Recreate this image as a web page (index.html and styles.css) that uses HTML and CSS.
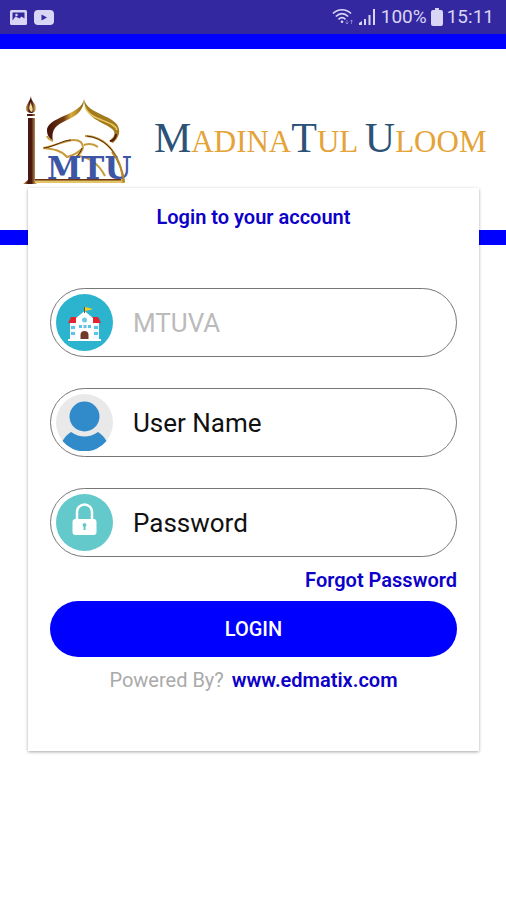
FILE: index.html
```
<!DOCTYPE html>
<html lang="en">
<head>
<meta charset="utf-8">
<meta name="viewport" content="width=device-width, initial-scale=1">
<title>MadinaTul Uloom</title>
<link rel="stylesheet" href="styles.css">
</head>
<body>
<div class="status">
  <div class="status-group">
    <svg width="18" height="17" viewBox="0 0 18 17" aria-hidden="true"><rect x="0" y="1" width="17" height="15" rx="1.500" fill="currentColor"/><path d="M2.500 3.500h12v6l-3-2-2 2-4-2-3 4z" fill="#3428a0"/><path d="M5 5.500l2-1 1 2-2 1z" fill="currentColor"/></svg>
    <svg width="20" height="16" viewBox="0 0 20 16" aria-hidden="true"><rect y="1" width="20" height="15" rx="4" fill="currentColor"/><path d="M7.500 5.500v6l5.500-3z" fill="#3428a0"/></svg>
  </div>
  <div class="status-group status-right">
    <svg width="22" height="18" viewBox="0 0 22 18" fill="none" stroke="currentColor" stroke-width="1.700" aria-hidden="true"><path d="M1 5.500C6 .5 14 .5 19 5.500M3.800 8.500c4-3.700 8.500-3.700 12.400 0M6.500 11.300c2.400-2.200 4.600-2.200 7 0"/><circle cx="10" cy="13.800" r="1.300" fill="currentColor" stroke="none"/><path d="M15 12v4M13.500 14.500l1.500 1.500 1.500-1.500M19.500 16v-4M18 13.500l1.500-1.500 1.500 1.500" stroke-width="1" opacity=".45"/></svg>
    <svg width="19" height="18" viewBox="0 0 19 18" fill="currentColor" aria-hidden="true"><path d="M1 15l3-2v4H1zM6 11h2v6H6zM10.500 7h2v10h-2zM15 1h2v16h-2z"/></svg>
    <span>100%</span>
    <svg width="12" height="18" viewBox="0 0 12 18" fill="currentColor" aria-hidden="true"><path d="M4 0h4v2h2a2 2 0 0 1 2 2v12a2 2 0 0 1-2 2H2a2 2 0 0 1-2-2V4a2 2 0 0 1 2-2h2z"/></svg>
    <span>15:11</span>
  </div>
</div>
<header class="brand">
  <svg class="logo" viewBox="22 93 116 92" role="img" aria-label="MTU">
    <defs>
      <linearGradient id="gold" x1="0" x2="1"><stop offset="0" stop-color="#421008"/><stop offset=".45" stop-color="#713b12"/><stop offset=".65" stop-color="#d9ac3c"/><stop offset="1" stop-color="#8a6414"/></linearGradient>
      <linearGradient id="pole" x1="0" x2="1"><stop offset="0" stop-color="#d9ae62"/><stop offset=".35" stop-color="#4a170e"/><stop offset=".6" stop-color="#4a170e"/><stop offset="1" stop-color="#edcf78"/></linearGradient>
    </defs>
    <path d="M31 95c-1 6-6 9-5 14 1 2 3 3 5 3 3 0 5-2 5-5 0-5-5-6-5-12z" fill="url(#pole)"/>
    <path d="M31 101c0 4 3 6 1 10-4-2-3-6-1-10z" fill="#f4dc99"/>
    <path d="M27 113h8v2h-8zM28 117h7v61l2 5H23l5-4z" fill="url(#pole)"/>
    <path d="M35 178h90v4H35z" fill="#e3c469"/><path d="M35 178h86v1.500H35z" fill="#6c3412"/>
    <path d="M84 98c-2 16-38 18-37 32 0 4 2 7 6 10-2-13 4-16 14-21 9-4 17-9 17-21z" fill="url(#gold)"/>
    <path d="M84 98c3 16 33 16 35 30 1 6-2 10-6 14l-4-2c6-4 7-9 3-12-8-7-28-10-28-30z" fill="#a37b1d"/>
    <path d="M85 106c5 14 29 13 32 23" fill="none" stroke="#e8ca65" stroke-width="1.500"/>
    <path d="M116 133c0 4-3 7-6 7" fill="none" stroke="#561b0d" stroke-width="2"/>
    <path d="M53 140c-3-1-5-2-6-5M43 147c12-2 23-8 31-8 6 0 9 3 9 8M43 147c10 1 18 2 24 9 8-2 13-6 16-9M83 147c-3 7-7 10-11 11M67 156l6-1M84 144c6-2 10-1 14 2M85 135c21 0 37 20 38 47M76 155c12 0 23 8 29 20" fill="none" stroke="#c89b3a" stroke-width="2"/>
    <path d="M44 147c10-1 19-8 27-8M82 147c-2 6-6 10-10 12M87 135c16 2 28 13 32 29" fill="none" stroke="#562711"/>
    <text class="monogram" x="47" y="178">MTU</text>
    <path d="M112 151c7 9 11 18 12 30" fill="none" stroke="#b5842c" stroke-width="2"/>
  </svg>
  <h1 class="wordmark"><b>M</b>ADINA<b>T</b>UL <b>U</b>LOOM</h1>
</header>
<main class="card">
  <form class="form">
    <h2 class="title">Login to your account</h2>
    <div class="fields">
      <label class="field">
        <svg class="badge" viewBox="0 0 57 57" aria-hidden="true"><circle cx="28.500" cy="28.500" r="28.500" fill="#2cb4cf"/><path d="M14 28h29v18H14z" fill="#f7f8fc"/><path d="M15 23h27l3 6H12z" fill="#e3242f"/><path d="M20 24l8.500-7 8.500 7v22H20z" fill="#fff"/><path d="M12 45h33v2H12z" fill="#fff"/><circle cx="28.500" cy="26" r="2.500" fill="#6fc9e6"/><path d="M28 13h1v6h-1z" fill="#795025"/><path d="M29 13l4 1 4 1-3 1-5 1z" fill="#f2cf25"/><path d="M24.500 45v-4a4 4 0 0 1 8 0v4z" fill="#703a28"/><path d="M15 32h4v3h-4zM15 38h4v3h-4zM38 32h4v3h-4zM38 38h4v3h-4zM23 31h3v3h-3zM27.500 31h3v3h-3zM32 31h3v3h-3z" fill="#5fc4e3"/></svg>
        <input class="input input-muted" type="text" aria-label="School code" placeholder="MTUVA">
      </label>
      <label class="field">
        <svg class="badge" viewBox="0 0 57 57" aria-hidden="true"><circle cx="28.500" cy="28.500" r="28.500" fill="#e9e9e9"/><circle cx="28.500" cy="22.500" r="15" fill="#318bca"/><path d="M15 38q13.500 9 27 0 5 3 8.500 9a28.500 28.500 0 0 1-44 0Q10 41 15 38z" fill="#318bca"/></svg>
        <input class="input" type="text" aria-label="User Name" placeholder="User Name">
      </label>
      <label class="field">
        <svg class="badge" viewBox="0 0 57 57" aria-hidden="true"><circle cx="28.500" cy="28.500" r="28.500" fill="#64c9ca"/><path d="M21 26v-8a7.500 7.500 0 0 1 15 0v8" fill="none" stroke="#fff" stroke-width="2.500"/><rect x="16.500" y="25" width="24" height="16" rx="3" fill="#fff"/><path d="M28.500 29a2 2 0 0 1 1 3.700V36h-2v-3.300a2 2 0 0 1 1-3.700z" fill="#64c9ca"/></svg>
        <input class="input" type="password" aria-label="Password" placeholder="Password">
      </label>
    </div>
    <a class="forgot" href="#">Forgot Password</a>
    <button class="login" type="submit">LOGIN</button>
    <p class="powered">Powered By? <a href="#">www.edmatix.com</a></p>
  </form>
</main>
</body>
</html>
```
FILE: styles.css
```
* { box-sizing: border-box; }
body { min-height: 100vh; margin: 0; background: #fff; font-family: Roboto, sans-serif; font-size: 20px; line-height: 24px; color: #111; }
.status { display: flex; justify-content: space-between; align-items: center; height: 34px; padding: 0 12px 0 10px; background: #3428a0; color: #d9d5f5; font-size: 19px; }
.status-group { display: flex; align-items: center; gap: 6px; }
.status-right { gap: 4px; }
.brand { display: flex; align-items: center; gap: 16px; height: 211px; padding: 0 16px 0 22px; border: solid #00f; border-width: 15px 0; }
.logo { flex: none; width: 116px; height: 92px; }
.monogram { font: bold 31px "DejaVu Serif", serif; fill: #3c56a5; }
.wordmark { margin: 0; font: 31px/48px "Liberation Serif", serif; color: #e5a338; white-space: nowrap; }
.wordmark b { font-size: 42px; font-weight: 400; color: #2c5277; }
.card { position: relative; margin: -57px 27px 0 28px; padding: 17px 22px 59px; background: #fff; box-shadow: 0 1px 3px rgba(0, 0, 0, .35); }
.form { display: flex; flex-direction: column; }
.title { margin: 0 0 59px; font-size: 20px; font-weight: 600; text-align: center; color: #0d00c8; }
.fields { display: grid; grid-template-columns: minmax(0, 1fr); gap: 31px; }
.field { display: flex; align-items: center; gap: 20px; height: 69px; padding: 0 28px 0 5px; border: 1px solid #777; border-radius: 35px; }
.badge { flex: none; width: 57px; height: 57px; }
.input { flex: 1; min-width: 0; padding: 0; border: 0; outline: 0; background: none; font: 26px/32px Roboto, sans-serif; color: #111; }
.input::placeholder { color: #111; opacity: 1; }
.input-muted::placeholder { color: #bbb; }
.forgot { align-self: flex-end; margin: 11px 0 9px; font-weight: 600; color: #0d00c8; text-decoration: none; }
.login { height: 56px; border: 0; border-radius: 28px; background: #00f; color: #fff; font: 500 20px/24px Roboto, sans-serif; }
.powered { display: flex; justify-content: center; gap: 8px; margin: 11px 0 0; color: #aaa; }
.powered a { font-weight: 600; color: #0d00c8; text-decoration: none; }
```
